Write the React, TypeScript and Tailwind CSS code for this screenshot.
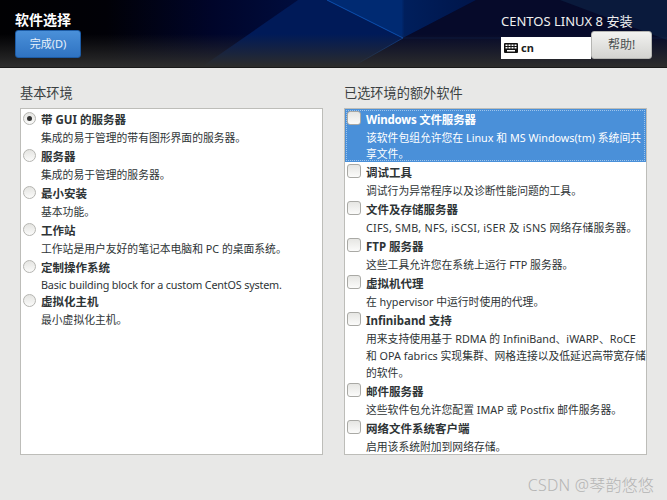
const F = '"Noto Sans","Noto Sans CJK SC",sans-serif';

function Radio({ on }: { on?: boolean }) {
  return (
    <span className="mt-[2px] flex h-[13px] w-[13px] shrink-0 items-center justify-center rounded-full border border-[#b5b5b1] bg-gradient-to-b from-[#e4e4e1] to-[#fbfbfa]">
      {on && <span className="h-[5px] w-[5px] rounded-full bg-[#333]" />}
    </span>
  );
}

function Check() {
  return <span className="mt-[1px] h-[14px] w-[14px] shrink-0 rounded-[3px] border border-[#a9a9a5] bg-gradient-to-b from-[#e6e6e3] to-[#fbfbfa]" />;
}

function Row({ control, title, desc, lh = "h-[17px]", sel, tc = "", dc = "" }: { control: React.ReactNode; title: string; desc: string[]; lh?: string; sel?: boolean; tc?: string; dc?: string }) {
  return (
    <div className={`flex gap-[5px] pl-[2px] ${sel ? "bg-[#4a90d9] pt-[1px] text-white outline-1 -outline-offset-2 outline-dotted outline-[#9fc4ea]" : "text-[#2e3436]"}`}>
      {control}
      <div className="min-w-0">
        <div className={`flex h-[20px] items-center text-[11.5px] font-bold whitespace-nowrap ${tc}`}>{title}</div>
        {desc.map((d) => (
          <div key={d} className={`flex ${lh} items-center text-[10.8px] whitespace-nowrap ${dc}`}>{d}</div>
        ))}
      </div>
    </div>
  );
}

const left: [string, string, string?, string?][] = [
  ["带 GUI 的服务器", "集成的易于管理的带有图形界面的服务器。"],
  ["服务器", "集成的易于管理的服务器。"],
  ["最小安装", "基本功能。"],
  ["工作站", "工作站是用户友好的笔记本电脑和 PC 的桌面系统。"],
  ["定制操作系统", "Basic building block for a custom CentOS system.", "h-[14px]", "tracking-[-0.18px]"],
  ["虚拟化主机", "最小虚拟化主机。"],
];

const right: [string, string[], string?][] = [
  ["调试工具", ["调试行为异常程序以及诊断性能问题的工具。"]],
  ["文件及存储服务器", ["CIFS, SMB, NFS, iSCSI, iSER 及 iSNS 网络存储服务器。"], "tracking-[0.22px]"],
  ["FTP 服务器", ["这些工具允许您在系统上运行 FTP 服务器。"]],
  ["虚拟机代理", ["在 hypervisor 中运行时使用的代理。"]],
  ["Infiniband 支持", ["用来支持使用基于 RDMA 的 InfiniBand、iWARP、RoCE", "和 OPA fabrics 实现集群、网格连接以及低延迟高带宽存储", "的软件。"]],
  ["邮件服务器", ["这些软件包允许您配置 IMAP 或 Postfix 邮件服务器。"]],
  ["网络文件系统客户端", ["启用该系统附加到网络存储。"]],
];

export default function App() {
  return (
    <div className="relative flex h-[500px] w-[667px] flex-col overflow-hidden bg-[#e8e8e7]" style={{ fontFamily: F }}>
      <header className="relative h-[68px] shrink-0 overflow-hidden border-b border-[#1a1a1a] bg-[#020818]">
        <svg className="absolute inset-0" width="667" height="68" viewBox="0 0 667 68">
          <defs>
            <linearGradient id="fade" x1="0" y1="0" x2="0" y2="1">
              <stop offset="0" stopColor="#2a2a2a" stopOpacity="0" />
              <stop offset="0.5" stopColor="#2a2a2a" stopOpacity="0" />
              <stop offset="0.97" stopColor="#2c2c2c" stopOpacity="1" />
            </linearGradient>
            <linearGradient id="bg" x1="0" y1="0" x2="1" y2="0">
              <stop offset="0" stopColor="#010103" />
              <stop offset="0.16" stopColor="#010107" />
              <stop offset="0.32" stopColor="#00052a" />
              <stop offset="0.5" stopColor="#001045" />
              <stop offset="1" stopColor="#001045" />
            </linearGradient>
            <linearGradient id="top" x1="0" y1="0" x2="1" y2="0">
              <stop offset="0" stopColor="#002a72" />
              <stop offset="0.5" stopColor="#002a72" />
              <stop offset="0.52" stopColor="#001f5c" />
              <stop offset="1" stopColor="#00154a" />
            </linearGradient>
          </defs>
          <rect width="667" height="68" fill="url(#bg)" />
          <polygon points="200,68 298,0 327,0 403,38 350,68" fill="#001a58" />
          <polygon points="327,0 476,0 403,38" fill="url(#top)" />
          <polygon points="476,0 667,0 667,68 350,68 403,38" fill="#060a2a" />
          <polygon points="560,0 667,0 667,40" fill="#0a1a3c" />
          <line x1="327" y1="0" x2="403" y2="38" stroke="#0f58bd" strokeOpacity="0.85" />
          <line x1="403" y1="38" x2="350" y2="68" stroke="#0f58bd" strokeOpacity="0.6" />
          <line x1="403" y1="38" x2="667" y2="38" stroke="#12306a" strokeOpacity="0.35" />
          <rect width="667" height="68" fill="url(#fade)" />
        </svg>
        <div className="relative flex h-full justify-between pl-[15px] pr-[15px]">
          <div className="pt-[10px]">
            <div className="h-[20px] text-[14px] leading-[20px] font-bold text-white">软件选择</div>
            <button className="h-[28px] w-[66px] rounded-[3px] border border-[#1c5ba5] bg-gradient-to-b from-[#4a90d9] to-[#2f73c2] text-[11px] text-[#e8f1fb]">完成(D)</button>
          </div>
          <div className="flex w-[151px] flex-col pt-[11px]">
            <div className="h-[20px] text-[13px] leading-[20px] whitespace-nowrap text-[#f0f0f0]">CENTOS LINUX 8 安装</div>
            <div className="flex w-full">
              <div className="mt-[6px] flex h-[22px] w-[90px] items-center gap-[3px] bg-white pl-[3px]">
                <svg width="14" height="10" viewBox="0 0 14 10">
                  <rect width="14" height="10" rx="1" fill="#111" />
                  <g fill="#fff">
                    <rect x="1.5" y="1.5" width="2" height="1.5" /><rect x="4.5" y="1.5" width="2" height="1.5" /><rect x="7.5" y="1.5" width="2" height="1.5" /><rect x="10.5" y="1.5" width="2" height="1.5" />
                    <rect x="1.5" y="4" width="2" height="1.5" /><rect x="4.5" y="4" width="2" height="1.5" /><rect x="7.5" y="4" width="2" height="1.5" /><rect x="10.5" y="4" width="2" height="1.5" />
                    <rect x="3" y="7" width="8" height="1.5" />
                  </g>
                </svg>
                <span className="text-[11px] font-bold text-[#222]">cn</span>
              </div>
              <button className="h-[28px] w-[61px] shrink-0 rounded-[3px] border border-[#b5b5b2] bg-gradient-to-b from-[#f2f2f0] to-[#d3d3d0] text-[12px] text-[#4a4f50]">帮助!</button>
            </div>
          </div>
        </div>
      </header>
      <main className="flex gap-[21px] pl-[20px] pr-[20px] pt-[14px]">
        <section className="w-[303px]">
          <h2 className="h-[26px] text-[13.2px] leading-[22px] font-normal text-[#3a3f41]">基本环境</h2>
          <div className="h-[347px] border border-[#bdbdb9] bg-white pt-[1px]">
            {left.map(([t, d, lh, dc]) => (
              <Row key={t} control={<Radio on={t.startsWith("带")} />} title={t} desc={[d]} lh={lh} dc={dc} />
            ))}
          </div>
        </section>
        <section className="w-[303px]">
          <h2 className="h-[26px] text-[13.2px] leading-[22px] font-normal text-[#3a3f41]">已选环境的额外软件</h2>
          <div className="h-[347px] overflow-hidden border border-[#bdbdb9] bg-white">
            <Row sel control={<Check />} lh="h-[16px]" tc="tracking-[-0.2px]" title="Windows 文件服务器" desc={["该软件包组允许您在 Linux 和 MS Windows(tm) 系统间共", "享文件。"]} />
            <div className="h-[1px]" />
            {right.map(([t, d, dc]) => (
              <Row key={t} control={<Check />} title={t} desc={d} dc={dc} />
            ))}
          </div>
        </section>
      </main>
      <div className="absolute bottom-[3px] right-[13px] text-[16px] font-light tracking-[0.2px] text-[#b4b4b4]">CSDN @琴韵悠悠</div>
    </div>
  );
}
